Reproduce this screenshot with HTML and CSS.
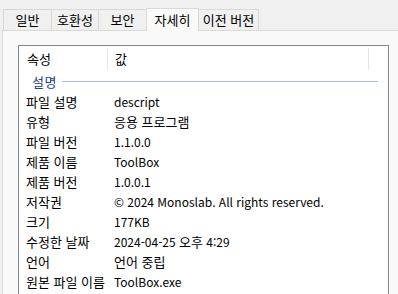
FILE: index.html
```html
<!DOCTYPE html>
<html lang="ko">
<head>
  <meta charset="UTF-8" />
  <title>ToolBox.exe 속성</title>
  <link rel="stylesheet" href="styles.css">
</head>
<body>
  <div class="tabs">
    <div class="tab t1">일반</div>
    <div class="tab t2">호환성</div>
    <div class="tab t3">보안</div>
    <div class="tab active">자세히</div>
    <div class="tab t5">이전 버전</div>
  </div>

  <div class="panel">
    <div class="listview">
      <div class="head">
        <div class="col-name">속성</div>
        <div class="col-value">값</div>
      </div>

      <div class="group">
        <span class="group-title">설명</span>
        <span class="group-line"></span>
      </div>

      <div class="row"><span class="name">파일 설명</span><span class="value">descript</span></div>
      <div class="row"><span class="name">유형</span><span class="value ko">응용 프로그램</span></div>
      <div class="row"><span class="name">파일 버전</span><span class="value">1.1.0.0</span></div>
      <div class="row"><span class="name">제품 이름</span><span class="value">ToolBox</span></div>
      <div class="row"><span class="name">제품 버전</span><span class="value">1.0.0.1</span></div>
      <div class="row"><span class="name">저작권</span><span class="value">© 2024 Monoslab. All rights reserved.</span></div>
      <div class="row"><span class="name">크기</span><span class="value">177KB</span></div>
      <div class="row"><span class="name">수정한 날짜</span><span class="value">2024-04-25 <span class="ko">오후</span> 4:29</span></div>
      <div class="row"><span class="name">언어</span><span class="value ko">언어 중립</span></div>
      <div class="row"><span class="name">원본 파일 이름</span><span class="value">ToolBox.exe</span></div>
    </div>
  </div>
</body>
</html>
```

FILE: styles.css
```css
body {
  margin: 0;
  background: #f0f0f0;
  font-family: "Noto Sans CJK KR", "Noto Sans", sans-serif;
  font-size: 12px;
  color: #000;
  overflow: hidden;
}

.tabs {
  display: flex;
  align-items: flex-end;
  height: 30px;
  padding-left: 3px;
}
.tab {
  box-sizing: border-box;
  height: 21px;
  border: 1px solid #d9d9d9;
  border-bottom: none;
  margin-right: -1px;
  background: #f0f0f0;
  font-size: 13px;
  line-height: 20px;
  text-align: center;
}
.t1 { width: 49px; }
.t2 { width: 48px; }
.t3 { width: 49px; }
.t5 { width: 61px; }
.tab.active {
  width: 53px;
  height: 23px;
  line-height: 22px;
  background: #f9f9f9;
  position: relative;
  z-index: 1;
  margin-bottom: -1px;
}

.panel {
  margin-left: 2px;
  border-top: 1px solid #d9d9d9;
  border-left: 1px solid #d9d9d9;
  background: #f9f9f9;
  padding: 14px 0 0 15px;
  height: 300px;
}

.listview {
  width: 369px;
  height: 300px;
  border: 1px solid #828790;
  background: #fff;
}

.head {
  display: flex;
  height: 25px;
  align-items: center;
  font-size: 13px;
}
.col-name {
  width: 80px;
  padding-left: 8px;
  height: 22px;
  line-height: 22px;
  border-right: 1px solid #e5e5e5;
}
.col-value {
  width: 253px;
  padding-left: 7px;
  height: 22px;
  line-height: 22px;
  border-right: 1px solid #e5e5e5;
}

.group {
  display: flex;
  align-items: center;
  height: 21px;
  padding-left: 13px;
  padding-right: 10px;
}
.group-title {
  color: #1e3c96;
  font-size: 13px;
  letter-spacing: 0.5px;
}
.group-line {
  flex: 1;
  height: 1px;
  margin-left: 5px;
  background: #a8bde6;
}

.row {
  display: flex;
  height: 20px;
  line-height: 20px;
}
.name {
  width: 88px;
  padding-left: 7px;
  font-size: 13px;
  white-space: nowrap;
}
.value {
  white-space: nowrap;
}
.ko {
  font-size: 13px;
}
```
